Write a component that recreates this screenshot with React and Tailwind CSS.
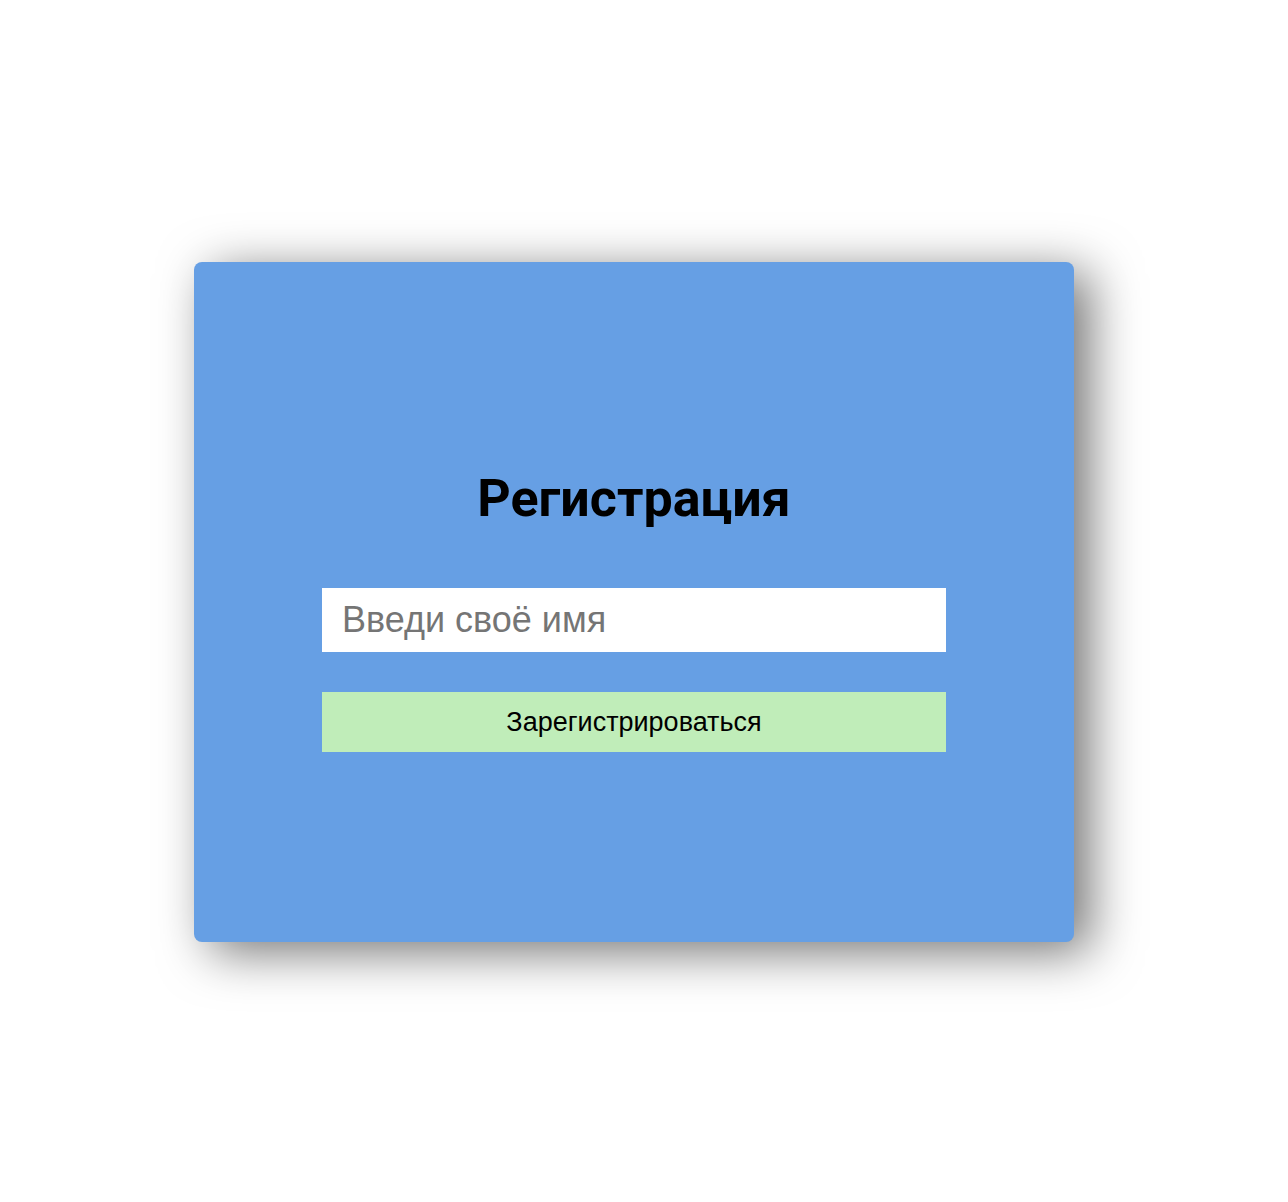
import React from 'react';

export default function App() {
  return (
    <div className="min-h-[1202px] w-full bg-white flex items-center justify-center pr-[20px] pt-[2px]">
      <div className="w-[880px] h-[680px] rounded-lg bg-[#669fe4] shadow-[16px_10px_50px_rgba(0,0,0,0.55)] flex flex-col items-center pt-[209px]">
        <h1 className="font-['Roboto',sans-serif] font-bold text-[52px] leading-[56px] text-black">
          Регистрация
        </h1>
        <input
          type="text"
          placeholder="Введи своё имя"
          className="mt-[61px] w-[624px] h-[64px] bg-white px-5 font-['Liberation_Sans',Arial,sans-serif] text-[36px] text-black placeholder:text-[#757575] outline-none"
        />
        <button
          type="button"
          className="mt-[40px] w-[624px] h-[60px] bg-[#c0edb9] font-['Liberation_Sans',Arial,sans-serif] text-[27px] text-black"
        >
          Зарегистрироваться
        </button>
      </div>
    </div>
  );
}
